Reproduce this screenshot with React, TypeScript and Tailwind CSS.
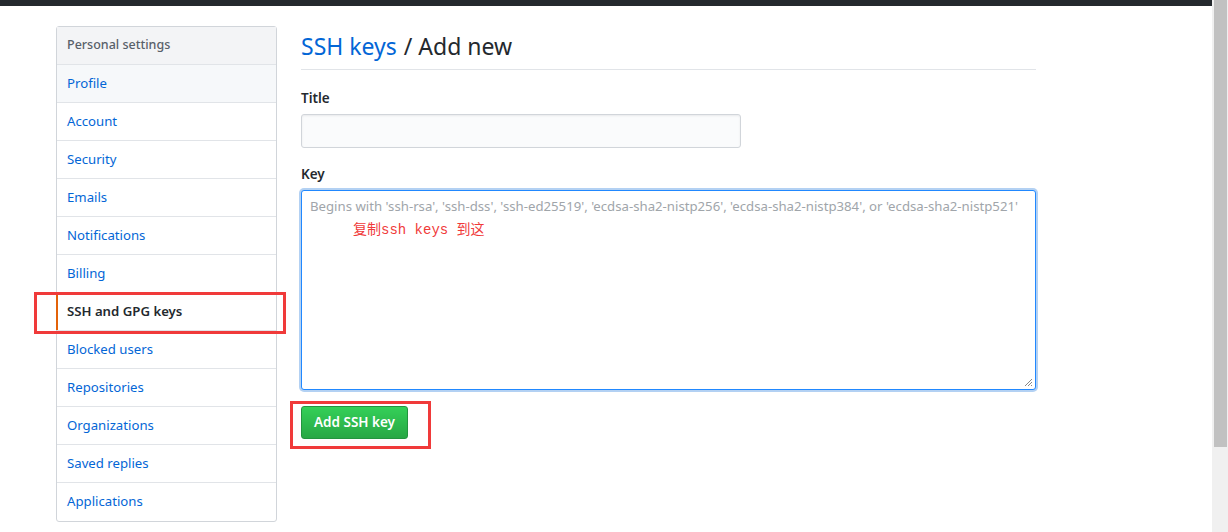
const navItems = [
  "Profile",
  "Account",
  "Security",
  "Emails",
  "Notifications",
  "Billing",
  "SSH and GPG keys",
  "Blocked users",
  "Repositories",
  "Organizations",
  "Saved replies",
  "Applications",
];

const font = { fontFamily: '"Noto Sans", "Liberation Sans", sans-serif' };

export default function App() {
  return (
    <div className="flex h-[532px] w-[1228px] overflow-hidden bg-white text-[#24292e]" style={font}>
      <div className="min-w-0 flex-1">
        <div className="h-[6px] bg-[#24292e]" />

        <div className="flex gap-6 pl-[56px] pt-5">
          {/* sidebar */}
          <nav className="w-[221px] shrink-0 rounded-[3px] border border-[#d1d5da]">
            <div className="flex h-[38px] items-center border-b border-[#e1e4e8] bg-[#f3f4f6] px-[10px] text-[12.5px] font-medium text-[#586069]">
              Personal settings
            </div>
            {navItems.map((item, i) => {
              const active = item === "SSH and GPG keys";
              return (
                <div
                  key={item}
                  className={
                    "relative flex h-[38px] items-center px-[10px] text-[13.2px] " +
                    (i < navItems.length - 1 ? "border-b border-[#e1e4e8] " : "") +
                    (i === 0 ? "bg-[#f6f8fa] " : "") +
                    (active ? "font-semibold text-[#24292e]" : "text-[#0366d6]")
                  }
                >
                  {active && (
                    <>
                      <span className="absolute left-[-1px] top-0 h-full w-[2px] bg-[#e36209]" />
                      <span className="absolute left-[-23px] right-[-10px] top-[-1px] bottom-[-4px] border-[3px] border-[#f03a3a]" />
                    </>
                  )}
                  {item}
                </div>
              );
            })}
          </nav>

          {/* main */}
          <div className="w-[735px] shrink-0">
            <div className="flex h-[44px] items-end border-b border-[#e1e4e8] pb-[11px] text-[23px] leading-none">
              <span className="text-[#0366d6]">SSH keys</span>
              <span className="ml-[7px]">/ Add new</span>
            </div>

            <div className="mt-[18px] text-[13.5px] font-semibold">Title</div>
            <div className="mt-[6px] h-[34px] w-[440px] rounded-[3px] border border-[#d1d5da] bg-[#fafbfc] shadow-[inset_0_1px_2px_rgba(27,31,35,0.075)]" />

            <div className="mt-[16px] text-[13.5px] font-semibold">Key</div>
            <div className="relative mt-[5px] h-[200px] w-[735px] rounded-[3px] border border-[#2188ff] bg-white shadow-[0_0_0_2px_rgba(3,102,214,0.3)]">
              <div className="px-[8px] pt-[6px] text-[13.2px] whitespace-nowrap text-[#a0a5aa]">
                Begins with 'ssh-rsa', 'ssh-dss', 'ssh-ed25519', 'ecdsa-sha2-nistp256', 'ecdsa-sha2-nistp384', or 'ecdsa-sha2-nistp521'
              </div>
              <div
                className="ml-[51px] mt-[4px] text-[14px] text-[#f03a3a]"
                style={{ fontFamily: '"Liberation Mono", "Noto Sans CJK SC", monospace' }}
              >
                复制ssh keys 到这
              </div>
              <svg className="absolute bottom-[2px] right-[2px]" width="9" height="9" viewBox="0 0 9 9">
                <path d="M8 1L1 8M8 4L4 8M8 7L7 8" stroke="#888" strokeWidth="1" />
              </svg>
            </div>

            <div className="relative mt-[16px] inline-block">
              <span className="absolute left-[-11px] top-[-5px] h-[48px] w-[141px] border-[3px] border-[#f03a3a]" />
              <button className="h-[33px] rounded-[3px] border border-[#23943f] bg-gradient-to-b from-[#34d058] to-[#28a745] px-[12px] text-[13.5px] font-semibold text-white">
                Add SSH key
              </button>
            </div>
          </div>
        </div>
      </div>

      {/* scrollbar */}
      <div className="h-full w-[16px] shrink-0 bg-[#f0f0f0] pl-[2px]">
        <div className="h-[447px] w-[13px] bg-[#c1c1c1]" />
      </div>
    </div>
  );
}
